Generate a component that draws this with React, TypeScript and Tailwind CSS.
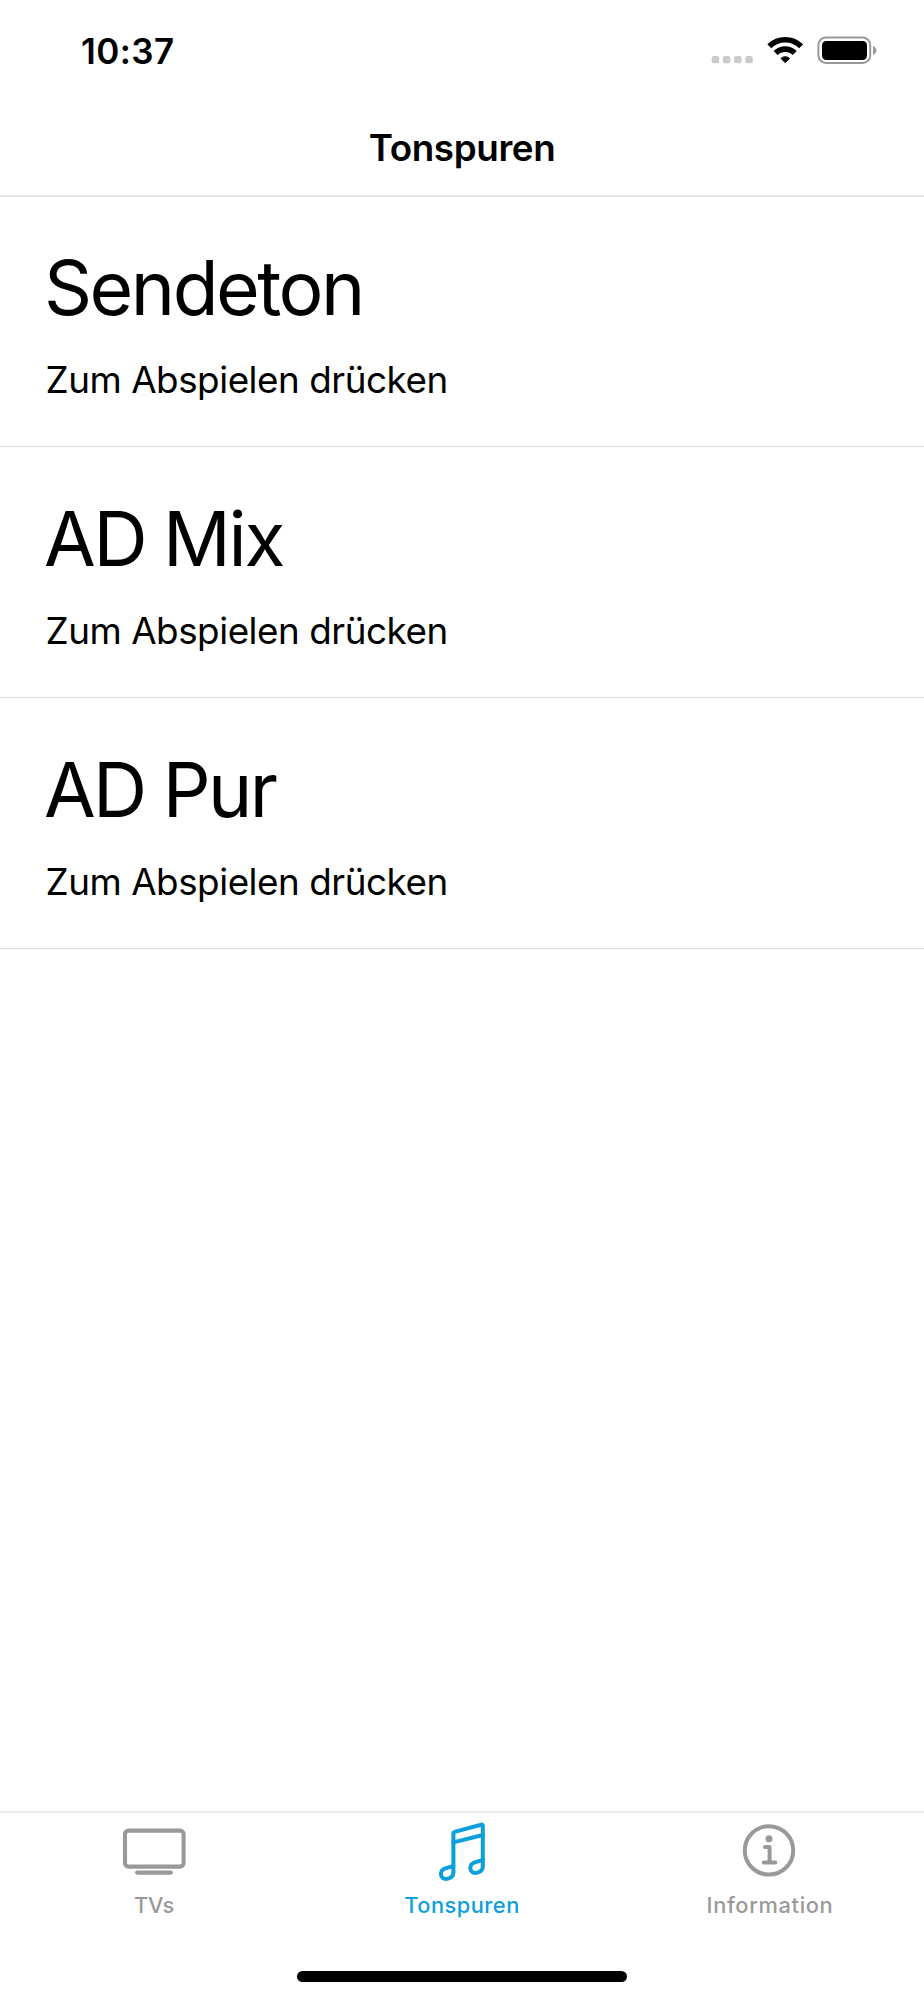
import type { ReactNode } from "react";

const tracks = [
  { name: "Sendeton", tracking: "tracking-[-2.5px]" },
  { name: "AD Mix", tracking: "tracking-[-2.3px] [word-spacing:-1px]" },
  { name: "AD Pur", tracking: "tracking-[-2.7px] [word-spacing:0px]" },
];

function StatusIcons() {
  return (
    <svg className="h-10 w-[180px]" viewBox="704 30 180 40" fill="none">
      <g fill="#cbcbcb">
        <rect x="711.7" y="56" width="7.5" height="7.3" rx="2" />
        <rect x="722.9" y="56" width="7.5" height="7.3" rx="2" />
        <rect x="734.1" y="56" width="7.5" height="7.3" rx="2" />
        <rect x="745.3" y="56" width="7.5" height="7.3" rx="2" />
      </g>
      <path d="M769.3 46.3 A22.5 22.5 0 0 1 801.1 46.3" stroke="#000" strokeWidth="5.6" />
      <path d="M775.6 53.1 A13.6 13.6 0 0 1 794.8 53.1" stroke="#000" strokeWidth="5.6" />
      <path
        d="M780.9 58.4 A6.4 6.4 0 0 1 789.5 58.4 L785.2 62.6 Z"
        fill="#000"
        stroke="#000"
        strokeWidth="1"
        strokeLinejoin="round"
      />
      <rect x="818.4" y="37.5" width="51.8" height="25.4" rx="7.5" stroke="#999" strokeWidth="2" />
      <rect x="822" y="41" width="45" height="18.9" rx="4.2" fill="#000" />
      <path d="M873 46 C877.6 47.8 877.6 53 873 54.8 Z" fill="#999" />
    </svg>
  );
}

function TvIcon() {
  return (
    <svg className="h-[70px] w-[70px]" viewBox="119 1815 70 70" fill="none" stroke="currentColor">
      <rect x="125" y="1830.6" width="58.6" height="36" rx="3.5" strokeWidth="4.1" />
      <path d="M137.2 1872.6 H170.8" strokeWidth="4.2" strokeLinecap="round" />
    </svg>
  );
}

function MusicIcon() {
  return (
    <svg
      className="h-[70px] w-[70px]"
      viewBox="2 0 70 70"
      fill="none"
      stroke="currentColor"
      strokeWidth="4"
      strokeLinecap="round"
      strokeLinejoin="round"
    >
      <path d="M28.4 57 V18.3 Q28.4 17.2 29.5 16.9 L56.2 9.7 Q57.8 9.3 57.8 10.8 V51" />
      <path d="M28.4 27.4 L57.8 20" />
      <path d="M28.4 51 L20.4 53.4 C17.4 54.4 15.9 56.6 15.9 59 C15.9 62.6 18.6 64.3 22 63.8 L24.4 63.1 C27.2 62.2 28.4 60 28.4 57" />
      <path d="M57.8 45 L49.8 47.4 C46.8 48.4 45.3 50.6 45.3 53 C45.3 56.6 48 58.3 51.4 57.8 L53.8 57.1 C56.6 56.2 57.8 54 57.8 51" />
    </svg>
  );
}

function InfoIcon() {
  return (
    <svg className="h-[70px] w-[70px]" viewBox="735 1815 70 70" fill="none" stroke="currentColor">
      <circle cx="769" cy="1850.4" r="24.2" strokeWidth="4" />
      <circle cx="769" cy="1838.7" r="3.5" fill="currentColor" stroke="none" />
      <path
        d="M765 1847 H769.6 V1862.6 M763.8 1862.6 H775.3"
        strokeWidth="4"
        strokeLinecap="round"
        strokeLinejoin="round"
      />
    </svg>
  );
}

function Tab({ label, color, tracking, icon }: { label: string; color: string; tracking: string; icon: ReactNode }) {
  return (
    <button className={`flex flex-1 flex-col items-center gap-[6px] pt-[2px] ${color}`}>
      {icon}
      <span className={`text-[21.8px] leading-[28px] font-medium ${tracking}`}>{label}</span>
    </button>
  );
}

export default function App() {
  return (
    <div className="flex h-[2000px] w-[924px] flex-col bg-white font-['Inter',sans-serif] text-black">
      <header className="flex h-[196px] shrink-0 flex-col border-b border-[#efefef] shadow-[0_1px_0_#dedede]">
        <div className="flex items-start justify-between pt-[28px] pr-[40px] pl-[81px]">
          <span className="pt-px text-[35px] leading-[44px] font-semibold tracking-[0.4px]">10:37</span>
          <div className="pt-[2px]">
            <StatusIcons />
          </div>
        </div>
        <h1 className="pt-[53px] text-center text-[36.8px] leading-[44px] font-semibold tracking-[-0.4px]">
          Tonspuren
        </h1>
      </header>

      <main className="flex-1">
        {tracks.map(({ name, tracking }) => (
          <section key={name} className="h-[251px] border-b border-[#d8d8d8] pt-[47px] pl-[45px]">
            <h2 className={`-ml-[1px] text-[75px] leading-[90px] font-normal ${tracking}`}>{name}</h2>
            <p className="pt-[25px] pl-[0.5px] text-[36.8px] leading-[44px] tracking-[-0.46px]">
              Zum Abspielen drücken
            </p>
          </section>
        ))}
      </main>

      <nav className="flex h-[189px] shrink-0 flex-col items-center border-t-2 border-[#ebebeb]">
        <div className="flex h-[158px] w-full">
          <Tab label="TVs" color="text-[#999999]" tracking="tracking-[-0.1px]" icon={<TvIcon />} />
          <Tab label="Tonspuren" color="text-[#0b9fdc]" tracking="tracking-[0.5px]" icon={<MusicIcon />} />
          <Tab label="Information" color="text-[#999999]" tracking="tracking-[0.66px]" icon={<InfoIcon />} />
        </div>
        <div className="h-[11px] w-[330px] rounded-full bg-black" />
      </nav>
    </div>
  );
}
